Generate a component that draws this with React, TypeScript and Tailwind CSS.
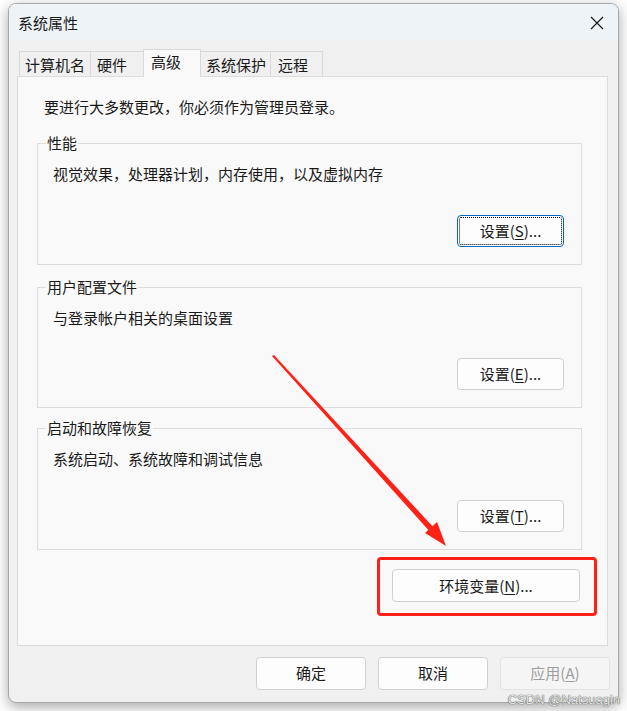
import React from "react";

const Btn = ({ label, k, rest, focused }: { label: string; k: string; rest: string; focused?: boolean }) => (
  <div
    className={
      "flex h-[32px] w-[107px] items-center justify-center rounded-[4px] border bg-[#fdfdfd] " +
      (focused ? "border-[#0067c0] p-[1px]" : "border-[#d0d0d0]")
    }
  >
    {focused ? (
      <div className="flex h-full w-full items-center justify-center rounded-[2px] border border-dotted border-black">
        <span className="leading-[20px]">
          {label}(<span className="underline underline-offset-2">{k}</span>){rest}
        </span>
      </div>
    ) : (
      <span className="leading-[20px]">
        {label}(<span className="underline underline-offset-2">{k}</span>){rest}
      </span>
    )}
  </div>
);

const Group = ({ title, text, k, focused, h }: { title: string; text: string; k: string; focused?: boolean; h: string }) => (
  <div className={"relative ml-[19px] flex w-[545px] flex-col border border-[#dcdcdc] pb-[17px] pl-[15px] pt-[20px] " + h}>
    <span className="absolute left-[8px] top-[-11px] bg-[#f9f9f9] px-[1px] leading-[20px]">{title}</span>
    <div className="leading-[20px]">{text}</div>
    <div className="mt-auto flex justify-end pr-[17px]">
      <Btn label="设置" k={k} rest="..." focused={focused} />
    </div>
  </div>
);

export default function App() {
  const tabs = [
    { t: "计算机名", w: "w-[72px]", pl: "pl-[5px]" },
    { t: "硬件", w: "w-[54px]", pl: "pl-[6px]" },
    { t: "高级", w: "w-[58px]", pl: "pl-[7px]", sel: true },
    { t: "系统保护", w: "w-[71px]", pl: "pl-[5px]" },
    { t: "远程", w: "w-[53px]", pl: "pl-[7px]" },
  ];
  return (
    <div className="relative h-[711px] w-[627px] overflow-hidden bg-white pl-[8px] pt-[3px] font-['Noto_Sans_CJK_SC',sans-serif] text-[15px] text-[#1a1a1a]">
      <div className="flex h-[700px] w-[611px] flex-col overflow-hidden rounded-[8px] border border-[#a8a8a8] bg-[#f0f0f0] shadow-[0_4px_14px_rgba(0,0,0,0.35)]">
        {/* title bar */}
        <div className="flex h-[36px] items-center justify-between bg-[#eef3f8] pl-[9px] pr-[14px]">
          <span className="mt-[2px] leading-[20px]">系统属性</span>
          <svg width="14" height="14" viewBox="0 0 14 14" className="mt-[2px]">
            <path d="M1 1L13 13M13 1L1 13" stroke="#1a1a1a" strokeWidth="1.2" />
          </svg>
        </div>
        {/* tabs */}
        <div className="ml-[10px] mt-[10px] flex h-[26px] items-end">
          {tabs.map((tb, i) =>
            tb.sel ? (
              <div
                key={i}
                className={"relative z-10 -mb-px -ml-px h-[28px] border border-b-0 border-[#d9d9d9] bg-[#f9f9f9] pt-[2px] leading-[20px] " + tb.w + " " + tb.pl}
              >
                {tb.t}
              </div>
            ) : (
              <div
                key={i}
                className={"h-[25px] border border-b-0 border-[#d9d9d9] bg-[#f0f0f0] pt-[3px] leading-[20px] " + (i > 0 ? "-ml-px " : "") + tb.w + " " + tb.pl}
              >
                {tb.t}
              </div>
            )
          )}
        </div>
        {/* panel */}
        <div className="ml-[8px] flex h-[570px] w-[591px] flex-col border border-[#dcdcdc] bg-[#f9f9f9]">
          <div className="ml-[26px] mt-[20px] leading-[20px]">要进行大多数更改，你必须作为管理员登录。</div>
          <div className="mt-[26px]">
            <Group title="性能" text="视觉效果，处理器计划，内存使用，以及虚拟内存" k="S" focused h="h-[122px]" />
          </div>
          <div className="mt-[22px]">
            <Group title="用户配置文件" text="与登录帐户相关的桌面设置" k="E" h="h-[121px]" />
          </div>
          <div className="mt-[20px]">
            <Group title="启动和故障恢复" text="系统启动、系统故障和调试信息" k="T" h="h-[122px]" />
          </div>
          <div className="mt-[19px] flex justify-end pr-[27px]">
            <div className="flex h-[33px] w-[188px] items-center justify-center rounded-[4px] border border-[#d0d0d0] bg-[#fdfdfd] leading-[20px]">
              环境变量(<span className="underline underline-offset-2">N</span>)...
            </div>
          </div>
        </div>
        {/* bottom buttons */}
        <div className="ml-[247px] mt-[11px] flex gap-[12px]">
          <div className="flex h-[33px] w-[110px] items-center justify-center rounded-[4px] border border-[#d0d0d0] bg-[#fdfdfd]">确定</div>
          <div className="flex h-[33px] w-[110px] items-center justify-center rounded-[4px] border border-[#d0d0d0] bg-[#fdfdfd]">取消</div>
          <div className="flex h-[33px] w-[110px] items-center justify-center rounded-[4px] border border-[#e3e3e3] bg-[#f5f5f5] text-[#9d9d9d]">
            应用(<span className="underline underline-offset-2">A</span>)
          </div>
        </div>
      </div>

      {/* annotation: red box */}
      <div className="pointer-events-none absolute left-[377px] top-[557px] h-[59px] w-[220px] rounded-[4px] border-[3px] border-[#ff2116]" />
      {/* annotation: red arrow */}
      <svg className="pointer-events-none absolute left-0 top-0" width="627" height="711" viewBox="0 0 627 711">
        <polygon points="272,356 274,355 436,530 432,534" fill="#ff2116" />
        <polygon points="446,546 437,522 425,533" fill="#ff2116" />
      </svg>
      {/* watermark */}
      <div className="absolute bottom-[2px] right-[7px] font-['Liberation_Sans',sans-serif] text-[13px] text-[#e6e6e6] [text-shadow:0_0_1px_#555,0_0_1px_#555]">
        CSDN @Natsuagin
      </div>
    </div>
  );
}
